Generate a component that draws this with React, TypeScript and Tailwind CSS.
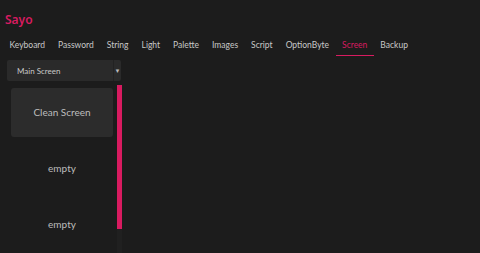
const tabs = ['Keyboard', 'Password', 'String', 'Light', 'Palette', 'Images', 'Script', 'OptionByte', 'Screen', 'Backup']

const items = ['Clean Screen', 'empty', 'empty']

export default function App() {
    return (
        <div className="h-[253px] w-[480px] overflow-hidden bg-[#1c1c1c] font-['Lato',sans-serif] text-[#c8c8c8]">
            <div className="flex h-[36px] items-center pl-[5px] pt-[3px]">
                <span className="font-['Noto_Sans',sans-serif] text-[12px] font-semibold leading-none text-[#d81b60]">Sayo</span>
            </div>

            <div className="flex h-[20px] items-stretch pl-[3px]">
                {tabs.map((t) => (
                    <div
                        key={t}
                        className={
                            t === 'Screen'
                                ? 'flex items-center border-b-[1.5px] border-[#d81b60] px-[6.5px] text-[8.5px] text-[#d81b60]'
                                : 'flex items-center border-b-[1.5px] border-transparent px-[6.5px] text-[8.5px]'
                        }
                    >
                        {t}
                    </div>
                ))}
            </div>

            <div className="ml-[7px] mt-[4px] flex h-[21px] w-[114px] items-center rounded-[2px] bg-[#2a2a2a]">
                <span className="flex-1 pl-[10px] text-[8px] text-[#c8c8c8]">Main Screen</span>
                <span className="flex h-full w-[8px] items-center justify-center border-l border-[#222] text-[6px] text-[#bbb]">▼</span>
            </div>

            <div className="ml-[7px] mt-[4px] flex h-[200px] w-[115px]">
                <div className="flex-1">
                    {items.map((it, i) => (
                        <div key={i} className="h-[56px] px-[4px] pb-[4px] pt-[3px]">
                            <div
                                className={
                                    i === 0
                                        ? 'flex h-full items-center justify-center rounded-[3px] bg-[#2c2c2c] text-[10px] text-[#bdbdbd]'
                                        : 'flex h-full items-center justify-center text-[10px] text-[#bdbdbd]'
                                }
                            >
                                {it}
                            </div>
                        </div>
                    ))}
                </div>
                <div className="w-[5px] bg-[#202020]">
                    <div className="h-[144px] w-full bg-[#d81b60]" />
                </div>
            </div>
        </div>
    )
}
